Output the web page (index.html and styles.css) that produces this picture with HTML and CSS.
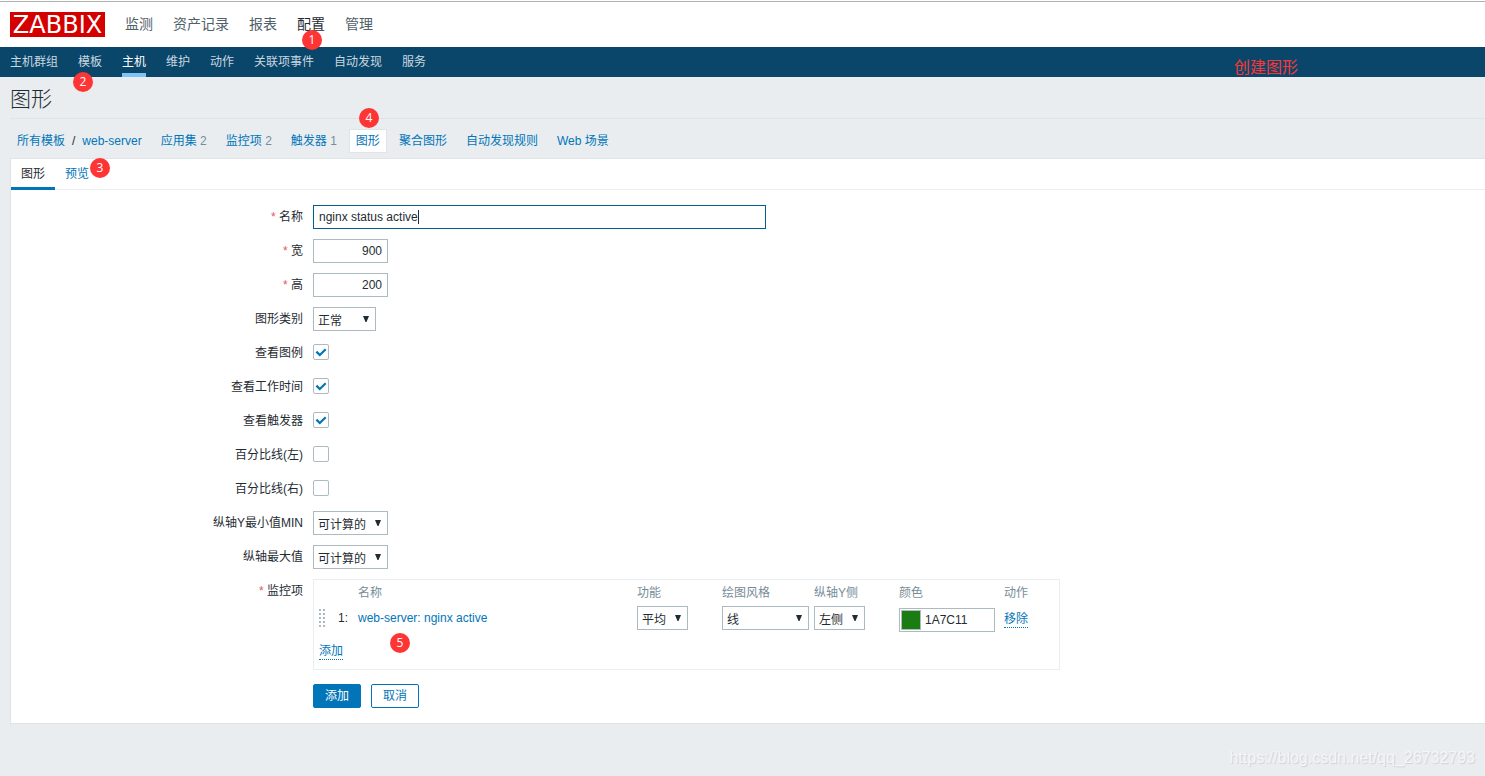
FILE: index.html
```html
<!DOCTYPE html>
<html lang="zh-CN">
<head>
<meta charset="utf-8">
<title>图形</title>
<link rel="stylesheet" href="styles.css">
</head>
<body>
<header class="header">
  <a class="logo" href="#">ZABBIX</a>
  <nav class="main-menu">
    <a href="#">监测</a>
    <a href="#">资产记录</a>
    <a href="#">报表</a>
    <a href="#" class="selected">配置</a>
    <a href="#">管理</a>
  </nav>
</header>
<nav class="sub-menu">
  <a href="#">主机群组</a>
  <a href="#">模板</a>
  <a href="#" class="selected">主机</a>
  <a href="#">维护</a>
  <a href="#">动作</a>
  <a href="#">关联项事件</a>
  <a href="#">自动发现</a>
  <a href="#">服务</a>
</nav>
<main class="content">
  <h1 class="title">图形</h1>
  <nav class="object-nav">
    <div class="crumbs"><a href="#">所有模板</a><span>/</span><a href="#">web-server</a></div>
    <div><a href="#">应用集</a> <small>2</small></div>
    <div><a href="#">监控项</a> <small>2</small></div>
    <div><a href="#">触发器</a> <small>1</small></div>
    <div class="selected"><a href="#">图形</a></div>
    <div><a href="#">聚合图形</a></div>
    <div><a href="#">自动发现规则</a></div>
    <div><a href="#">Web 场景</a></div>
  </nav>
  <section class="panel">
    <nav class="tabs">
      <a href="#" class="selected">图形</a>
      <a href="#">预览</a>
    </nav>
    <form class="form">
      <label class="required" for="name">名称</label>
      <div class="field caret"><input class="text wide" id="name" type="text" value="nginx status active"></div>
      <label class="required" for="width">宽</label>
      <div class="field"><input class="text number" id="width" type="text" value="900"></div>
      <label class="required" for="height">高</label>
      <div class="field"><input class="text number" id="height" type="text" value="200"></div>
      <label for="type">图形类别</label>
      <div class="field"><select class="select-type" id="type"><option>正常</option></select></div>
      <label for="legend">查看图例</label>
      <div class="field"><input type="checkbox" id="legend" checked></div>
      <label for="worktime">查看工作时间</label>
      <div class="field"><input type="checkbox" id="worktime" checked></div>
      <label for="triggers">查看触发器</label>
      <div class="field"><input type="checkbox" id="triggers" checked></div>
      <label for="pleft">百分比线(左)</label>
      <div class="field"><input type="checkbox" id="pleft"></div>
      <label for="pright">百分比线(右)</label>
      <div class="field"><input type="checkbox" id="pright"></div>
      <label for="ymin">纵轴Y最小值MIN</label>
      <div class="field"><select class="select-axis" id="ymin"><option>可计算的</option></select></div>
      <label for="ymax">纵轴最大值</label>
      <div class="field"><select class="select-axis" id="ymax"><option>可计算的</option></select></div>
      <div class="label required" id="items-label">监控项</div>
      <div class="items">
        <table aria-labelledby="items-label">
          <colgroup>
            <col class="c-drag"><col class="c-num"><col><col class="c-func"><col class="c-draw"><col class="c-side"><col class="c-color"><col class="c-action">
          </colgroup>
          <thead>
            <tr><th></th><th></th><th>名称</th><th>功能</th><th>绘图风格</th><th>纵轴Y侧</th><th>颜色</th><th>动作</th></tr>
          </thead>
          <tbody>
            <tr>
              <td><span class="drag"></span></td>
              <td>1:</td>
              <td><a href="#">web-server: nginx active</a></td>
              <td><select class="select-short" aria-label="功能"><option>平均</option></select></td>
              <td><select class="select-draw" aria-label="绘图风格"><option>线</option></select></td>
              <td><select class="select-short" aria-label="纵轴Y侧"><option>左侧</option></select></td>
              <td><div class="color"><button type="button" class="swatch" aria-label="选择颜色"></button><input type="text" value="1A7C11" aria-label="颜色"></div></td>
              <td><button type="button" class="link remove">移除</button></td>
            </tr>
          </tbody>
        </table>
        <button type="button" class="link add">添加</button>
      </div>
      <div class="actions">
        <button type="button" class="btn primary">添加</button>
        <button type="button" class="btn">取消</button>
      </div>
    </form>
  </section>
</main>
<span class="pin pin-1">1</span>
<span class="pin pin-2">2</span>
<span class="pin pin-3">3</span>
<span class="pin pin-4">4</span>
<span class="pin pin-5">5</span>
<span class="note">创建图形</span>
<span class="watermark">https://blog.csdn.net/qq_26732793</span>
</body>
</html>
```
FILE: styles.css
```css
* { box-sizing: border-box; }
body {
  position: relative;
  margin: 0;
  min-height: 100vh;
  background: #e9edf0;
  color: #1f2c33;
  font: 12px/16px "Liberation Sans", "Noto Sans CJK SC", sans-serif;
}
a { color: #0275b8; text-decoration: none; }
input, select, button { font: inherit; color: inherit; margin: 0; }

.header {
  display: flex;
  align-items: center;
  gap: 20px;
  height: 47px;
  padding: 2px 10px 0;
  background: #fff;
  box-shadow: inset 0 1px #fff, inset 0 2px #b0b0b0;
}
.logo {
  width: 95px;
  height: 25px;
  background: #d40000;
  color: #fff;
  font: 24px/27px "DejaVu Sans", sans-serif;
  text-align: center;
}
.main-menu { display: flex; gap: 20px; padding-bottom: 2px; font-size: 14px; line-height: 20px; }
.main-menu a { color: #4f6069; }
.main-menu .selected { color: #1f2c33; }

.sub-menu {
  display: flex;
  gap: 20px;
  height: 30px;
  padding: 0 10px;
  background: #0a466a;
  line-height: 30px;
}
.sub-menu a { color: #c8d7e0; }
.sub-menu .selected { color: #fff; border-bottom: 4px solid #7ec3f5; }

.content { padding-left: 10px; }
.title {
  margin: 0;
  padding: 8px 0 5px;
  border-bottom: 1px solid #dfe4e7;
  font-size: 21px;
  font-weight: 300;
  line-height: 28px;
}
.object-nav { display: flex; gap: 5px; padding: 10px 0 5px; }
.object-nav > div {
  padding: 2px 6px;
  border: 1px solid transparent;
  line-height: 18px;
}
.object-nav > .crumbs { display: flex; gap: 7px; }
.object-nav > .selected { background: #fff; border-color: #dfe4e7; }
.object-nav small { color: #768d99; font-size: 12px; }

.panel { background: #fff; border: 1px solid #dfe4e7; border-right: 0; }
.tabs { display: flex; border-bottom: 1px solid #ebeef0; }
.tabs a { padding: 0 10px; height: 30px; line-height: 30px; }
.tabs .selected { color: #1f2c33; box-shadow: inset 0 -2px #0275b8, 0 1px #0275b8; }

.form {
  display: grid;
  grid-template-columns: 292px minmax(0, 1fr);
  column-gap: 10px;
  row-gap: 10px;
  padding: 15px 0;
}
.form > label, .label { text-align: right; line-height: 24px; }
.required::before { content: "* "; color: #e45959; }
.field { display: flex; align-items: center; height: 24px; }
.text { height: 24px; padding: 0 5px; border: 1px solid #acbbc2; background: #fff; }
.caret { position: relative; }
.caret::after {
  content: "";
  position: absolute;
  left: 105px;
  top: 5px;
  width: 1px;
  height: 14px;
  background: #1f2c33;
}
.wide { width: 453px; border-color: #00608f; }
.number { width: 75px; text-align: right; }
select {
  display: block;
  appearance: none;
  height: 24px;
  padding: 3px 4px 0;
  border: 1px solid #acbbc2;
  border-radius: 0;
  background: #fff url("data:image/svg+xml,%3Csvg xmlns='http://www.w3.org/2000/svg' width='6' height='6'%3E%3Cpath d='M0 0h6L3.5 6h-1z' fill='%231f2c33'/%3E%3C/svg%3E") no-repeat right 6px top 8px;
}
.select-type { width: 63px; }
.select-axis { width: 75px; }
.select-short { width: 51px; }
.select-draw { width: 87px; }
input[type="checkbox"] {
  appearance: none;
  width: 16px;
  height: 16px;
  margin-bottom: 2px;
  border: 1px solid #acbbc2;
  border-radius: 2px;
  background: #fff;
}
input[type="checkbox"]:checked {
  background: #fff url("data:image/svg+xml,%3Csvg xmlns='http://www.w3.org/2000/svg' width='14' height='14'%3E%3Cpath d='M2.4 6.6l3.4 3.4 5.9-5.7' fill='none' stroke='%230275b8' stroke-width='2.2'/%3E%3C/svg%3E") center no-repeat;
}

.items { max-width: 747px; padding-bottom: 9px; border: 1px solid #ebeef0; }
.items table { width: 100%; table-layout: fixed; border-collapse: collapse; }
.items th { padding: 2px 0 0 5px; height: 24px; color: #768d99; font-weight: 400; text-align: left; }
.items td { padding: 0 0 0 5px; height: 28px; vertical-align: middle; }
.c-drag { width: 19px; }
.c-num { width: 20px; }
.c-func, .c-side { width: 85px; }
.c-draw { width: 92px; }
.c-color { width: 105px; }
.c-action { width: 60px; }
.drag {
  display: block;
  width: 6px;
  height: 18px;
  background: repeating-linear-gradient(#fff0 0 2px, #fff 2px 4px), linear-gradient(90deg, #acbbc2 2px, #fff 2px 4px, #acbbc2 4px);
}
.color { display: flex; align-items: center; gap: 4px; width: 96px; height: 24px; margin-top: 4px; padding-left: 1px; border: 1px solid #acbbc2; }
.swatch { width: 20px; height: 20px; padding: 0; border: 1px solid #acbbc2; background: #1a7c11; }
.color input { width: 66px; padding: 0; border: 0; background: none; }
.link { padding: 0; border: 0; border-bottom: 1px dotted #0275b8; background: none; color: #0275b8; line-height: 15px; }
.remove { display: block; margin-top: 3px; }
.add { display: block; margin: 12px 0 0 5px; }
.actions { grid-column: 2; display: flex; gap: 10px; padding-top: 4px; }
.btn { height: 24px; padding: 0 11px; border: 1px solid #0275b8; border-radius: 2px; background: #fff; color: #0275b8; }
.primary { background: #0275b8; color: #fff; }

.pin {
  position: absolute;
  width: 20px;
  height: 20px;
  border-radius: 50%;
  background: #fd3535;
  color: #fff;
  font: 12px/20px "Open Sans", sans-serif;
  text-align: center;
}
.pin-1 { left: 302px; top: 30px; }
.pin-2 { left: 73px; top: 72px; }
.pin-3 { left: 90px; top: 158px; }
.pin-4 { left: 359px; top: 108px; }
.pin-5 { left: 390px; top: 633px; }
.note { position: absolute; left: 1234px; top: 56px; color: #fd3535; font-size: 16px; line-height: 24px; }
.watermark {
  position: absolute;
  right: 10px;
  bottom: 8px;
  color: #f4f6f7;
  font-size: 16px;
  line-height: 20px;
  text-shadow: 1px 1px 1px #cdd1d3;
}
```
